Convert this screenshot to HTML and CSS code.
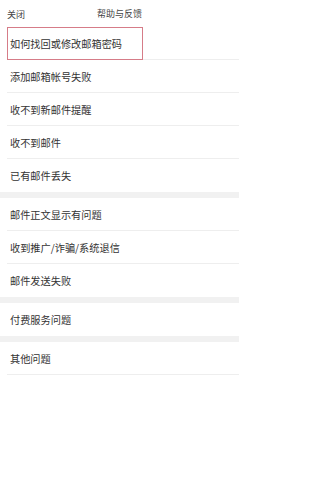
FILE: index.html
```html
<!DOCTYPE html>
<html lang="zh-CN">
<head>
<meta charset="utf-8">
<title>帮助与反馈</title>
<link rel="stylesheet" href="styles.css">
</head>
<body>
<div class="page">
<header class="topbar">
  <span class="close">关闭</span>
  <span class="title">帮助与反馈</span>
</header>
<main>
  <ul class="group">
    <li class="item highlighted"><span>如何找回或修改邮箱密码</span><i class="mark"></i></li>
    <li class="item"><span>添加邮箱帐号失败</span></li>
    <li class="item"><span>收不到新邮件提醒</span></li>
    <li class="item"><span>收不到邮件</span></li>
    <li class="item"><span>已有邮件丢失</span></li>
  </ul>
  <ul class="group">
    <li class="item"><span>邮件正文显示有问题</span></li>
    <li class="item"><span>收到推广/诈骗/系统退信</span></li>
    <li class="item"><span>邮件发送失败</span></li>
  </ul>
  <ul class="group">
    <li class="item"><span>付费服务问题</span></li>
  </ul>
  <ul class="group">
    <li class="item"><span>其他问题</span></li>
  </ul>
</main>
</div>
</body>
</html>
```

FILE: styles.css
```css
html, body {
  margin: 0;
  padding: 0;
  background: #ffffff;
  font-family: "Noto Sans CJK SC", "Noto Sans", sans-serif;
  color: #333333;
}

.page {
  width: 239px;
}

.topbar {
  position: relative;
  height: 27px;
  display: flex;
  align-items: center;
  justify-content: center;
  font-size: 9px;
  color: #444444;
}

.topbar .close {
  position: absolute;
  left: 7px;
  top: 50%;
  transform: translateY(-50%);
}

main {
  display: flex;
  flex-direction: column;
  gap: 6px;
  background: #f1f1f1;
}

.group {
  list-style: none;
  margin: 0;
  padding: 0;
  background: #ffffff;
}

.item {
  position: relative;
  height: 33px;
  margin-left: 7px;
  padding-left: 3px;
  display: flex;
  align-items: center;
  font-size: 10.2px;
  color: #333333;
  border-bottom: 1px solid #eeeeee;
  box-sizing: border-box;
}

.group .item:last-child {
  border-bottom: none;
}

.group:last-child .item:last-child {
  border-bottom: 1px solid #eeeeee;
}

.mark {
  position: absolute;
  left: 0;
  top: 0;
  width: 136px;
  height: 33px;
  box-sizing: border-box;
  border: 1px solid #d67c88;
}
```
